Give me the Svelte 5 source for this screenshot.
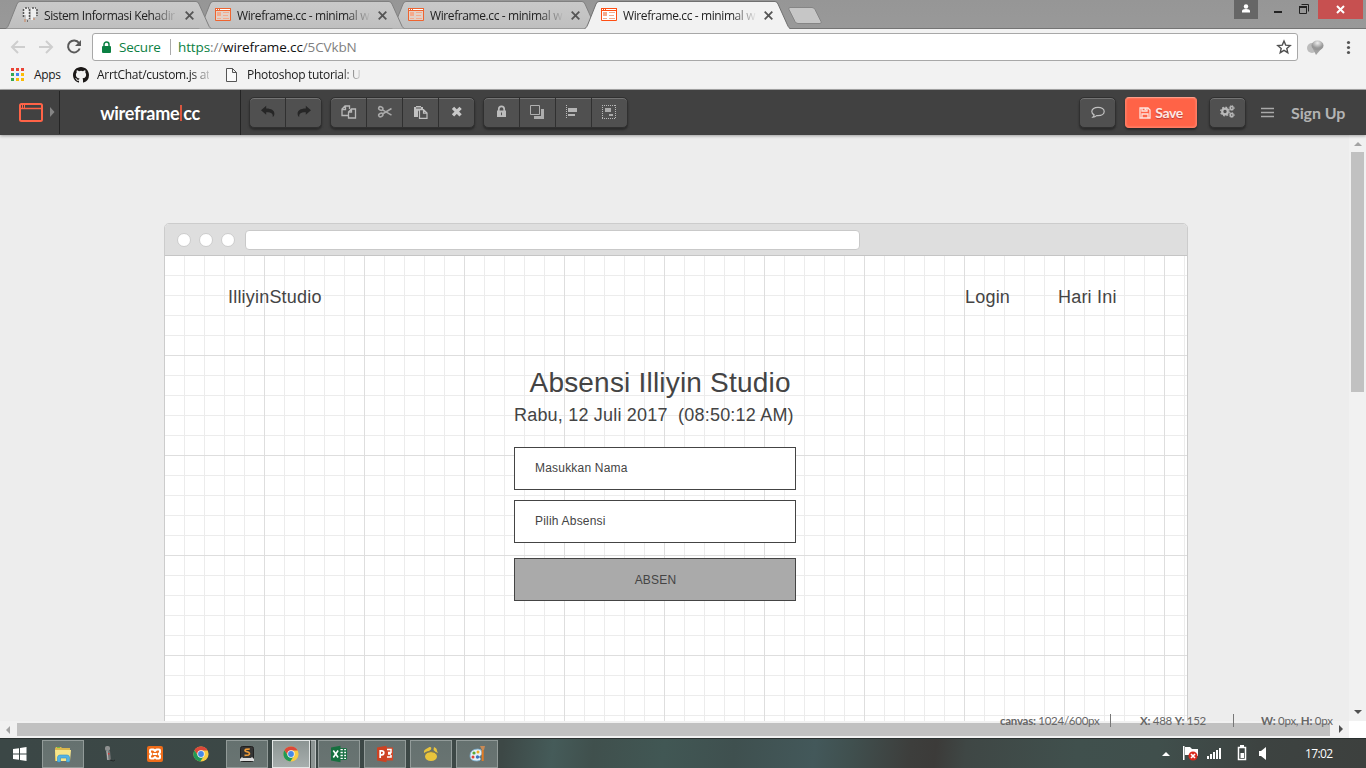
<script>
  const tabs = [
    { title: 'Sistem Informasi Kehadir', kind: 'sheet' },
    { title: 'Wireframe.cc - minimal w', kind: 'wire' },
    { title: 'Wireframe.cc - minimal w', kind: 'wire' },
    { title: 'Wireframe.cc - minimal w', kind: 'wire', active: true }
  ];
  const appDots = ['#ea4335', '#ea4335', '#ea4335', '#34a853', '#4285f4', '#fbbc05', '#34a853', '#fbbc05', '#fbbc05'];
  const editTools = ['copy', 'cut', 'paste', 'delete'];
  const arrangeTools = ['lock', 'layers', 'align', 'group'];
  const tasks = [
    { icon: 'explorer', open: true },
    { icon: 'mic' },
    { icon: 'xampp' },
    { icon: 'chrome' },
    { icon: 'sublime', open: true },
    { icon: 'chrome', open: true, active: true },
    { icon: 'excel', open: true },
    { icon: 'ppt', open: true },
    { icon: 'claw', open: true },
    { icon: 'paint', open: true }
  ];
</script>

{#snippet tool(name)}
  <svg class="glyph" width="36" height="30" viewBox="0 0 36 30">
    {#if name === 'undo'}
      <path fill="#262626" d="M11 13.2 16.2 8.8v2.7c5.600 0 8.200 2.200 8.200 5.200 0 1.500-.6 2.600-1.700 3.300.4-2.800-.7-4.800-6.500-4.800v2.500z" />
    {:else if name === 'redo'}
      <path fill="#262626" d="M25 13.2 19.800 8.800v2.700c-5.600 0-8.200 2.200-8.200 5.200 0 1.500.6 2.600 1.700 3.300-.4-2.800.7-4.800 6.500-4.800v2.500z" />
    {:else if name === 'copy'}
      <path fill="none" stroke="#b9b9b9" stroke-width="1.300" d="M17 18.500h-6v-6.500l3-3h4.500v3M14.500 9v3.500H11M17.500 15l3-3h4v9h-7zM20.500 12v3h-3" />
    {:else if name === 'cut'}
      <g fill="none" stroke="#a9a9a9" stroke-width="1.500"><ellipse cx="13.800" cy="11.500" rx="2.200" ry="1.700" transform="rotate(25 13.800 11.500)" /><ellipse cx="13.800" cy="18" rx="2.200" ry="1.700" transform="rotate(-25 13.800 18)" /><path d="m15.500 12.800 9 5.400M15.500 17 24.500 11.500" /></g>
    {:else if name === 'paste'}
      <path fill="#c1c1c1" d="M11 10h2V9h5v1h2v2h-3l-2 2.500V20h-4z" /><path fill="#505050" d="M13 10.500h5v1h-5z" /><path fill="none" stroke="#c1c1c1" stroke-width="1.200" d="M16.500 12.600h4l3.500 3.500v5.300h-7.500zM20.500 12.600v3.500H24" />
    {:else if name === 'delete'}
      <path stroke="#c8c8c8" stroke-width="3.300" d="m14 10.800 7.600 7.600m0-7.600L14 18.400" />
    {:else if name === 'lock'}
      <path fill="#bcbcbc" d="M13 13.500h9V20h-9z" /><path fill="none" stroke="#bcbcbc" stroke-width="1.700" d="M14.800 14v-1.900a2.700 2.700 0 0 1 5.400 0V14" /><path stroke="#555" d="M17.500 15.500v2.700" />
    {:else if name === 'layers'}
      <path fill="#adadad" d="M24 12v10H14v-3h7v-7z" /><path fill="#505050" stroke="#b0b0b0" d="M10.500 8.500h9v9h-9z" />
    {:else if name === 'align'}
      <path stroke="#bbb" stroke-dasharray="1 1" d="M10.500 8v14" /><path fill="#b5b5b5" d="M12 11h9v4h-9zm0 6h7v2h-7z" />
    {:else if name === 'group'}
      <path fill="none" stroke="#b9b9b9" stroke-dasharray="1 1" d="M10 8.500h14M10 21.500h14M10.500 8v14M23.500 8v14" /><path fill="#aaa" d="M13 11h6v4h-6zm4 6h4v2h-4z" />
    {:else if name === 'comment'}
      <path fill="none" stroke="#c1c1c1" stroke-width="1.200" d="M18 10.300c3.600 0 6.200 1.800 6.200 4.200s-2.600 4.200-6.200 4.200l-1.400-.1c-1 .9-2.400 1.500-3.700 1.600.7-.7 1.100-1.400 1.200-2.300-1.500-.8-2.300-2-2.300-3.400 0-2.400 2.600-4.200 6.200-4.200z" />
    {:else if name === 'gears'}
      <g fill="none" stroke="#b9b9b9"><circle cx="15" cy="14.500" r="2.800" stroke-width="2.200" /><circle cx="15" cy="14.500" r="4.300" stroke-width="1.300" stroke-dasharray="1.700 1.680" /><circle cx="21.700" cy="11" r="1.500" stroke-width="1.400" /><circle cx="21.700" cy="18" r="1.500" stroke-width="1.400" /><circle cx="21.700" cy="11" r="2.500" stroke-dasharray="1 1" /><circle cx="21.700" cy="18" r="2.500" stroke-dasharray="1 1" /></g>
    {/if}
  </svg>
{/snippet}

{#snippet app(name)}
  <svg width="18" height="18" viewBox="0 0 18 18">
    {#if name === 'explorer'}
      <path fill="#d9b64d" d="M1 3.500 2 2h5l1 1h8v13H1z" /><path fill="#f7e58b" d="M1 5h16l-1 11H2z" /><path fill="#72b944" d="M3 2h3v1H3z" /><path fill="#53b3e4" stroke="#3590c4" stroke-width=".6" d="M3.500 17v-5Q4 10 6 10h7q2 0 2.500 2v5h-3v-4h-6v4z" />
    {:else if name === 'mic'}
      <rect x="5" y="1" width="5" height="5" rx="2" fill="#8e9090" /><path fill="#727575" d="M6 6h4l1 9H7z" /><path fill="#b9bcbc" d="M6.500 6h1l1 9h-1z" /><path fill="#d53939" d="M8 8h1.500v1.500H8z" /><path fill="none" stroke="#242828" d="M10 15q4 2 5 0" />
    {:else if name === 'xampp'}
      <rect x="1" y="1" width="16" height="16" rx="2" fill="#ee6c19" /><path fill="none" stroke="#fff" stroke-width="2" stroke-linejoin="round" d="M5 4.500h2.500L9 6l1.500-1.500H13q1 0 1 1v2L12.500 9l1.500 1.500v2q0 1-1 1h-2.500L9 12l-1.500 1.500H5q-1 0-1-1v-2L5.500 9 4 7.500v-2q0-1 1-1zM7 9h4" />
    {:else if name === 'chrome'}
      <circle cx="9" cy="9" r="7.600" fill="#f9cc42" /><path fill="#dc483a" d="M2.400 5.200A7.600 7.600 0 0 1 15.700 5.500H9A3.500 3.500 0 0 0 5.900 10.500z" /><path fill="#209957" d="M2.400 5.200A7.600 7.600 0 0 0 8.300 16.600l3.600-5.600A3.500 3.500 0 0 1 6 10.800z" /><circle cx="9" cy="9" r="3.700" fill="#f3f3f3" /><circle cx="9" cy="9" r="2.900" fill="#4688e8" />
    {:else if name === 'sublime'}
      <rect x="2.500" y="1.500" width="13" height="15" rx="2" fill="#343434" stroke="#202020" /><path fill="#ddd" d="m2 14 2-2h10l2 2v2H2z" /><path fill="#393939" d="m4 13 1-1h8l1 1z" /><path fill="none" stroke="#ee9b38" stroke-width="1.700" d="M11.800 4 8 4.300Q6 5.500 8 6.500l2.500.7Q12.500 9 10.500 10L6.500 10.400" />
    {:else if name === 'excel'}
      <path fill="#fff" stroke="#1b7044" d="M9 3.500h7.500v11H9z" /><path stroke="#1b7044" stroke-width="1.400" d="M10 6h6M10 9h6M10 12h6M13.500 4v10" /><path fill="#16703f" d="m1 2.500 9.500-1.700v16.400L1 15.500z" /><path stroke="#fff" stroke-width="1.600" d="m3.300 5.500 4.800 7M8.100 5.500l-4.800 7" />
    {:else if name === 'ppt'}
      <path fill="#d34727" d="M9 2.500h8v13H9z" /><path fill="none" stroke="#fff" stroke-width="1.500" d="M11 4.500h4v3h-3m0 1.500h3m-4 3h4V10" /><path fill="#cd4222" d="m1 2.500 9.500-1.700v16.400L1 15.500z" /><path fill="none" stroke="#fff" stroke-width="1.700" d="M4.200 13V5.800h1.600q2 0 2 2t-2 2H4.200" />
    {:else if name === 'claw'}
      <g fill="#e9c43c"><ellipse cx="9" cy="11.500" rx="6" ry="4.500" /><path d="M2 8Q1.500 5 4 4L7.500 2Q10 1.500 9 4.500L7 6Q4 6.500 2 8zM12 2q3 1 3 4l1 2q-3-1-4.500-3z" /></g><path fill="none" stroke="#8b7c41" d="M3 9Q5 6.500 9 6.600q3 0 5.500 2" />
    {:else}
      <path fill="#e5f0f6" stroke="#77afd2" stroke-width=".8" d="M2 11q0-7 8-7 4 0 4 4 0 2-2 3t1 3q-1 2-4 2-7 0-7-5z" /><circle cx="6" cy="8" r="1.600" fill="#58a735" /><circle cx="10" cy="7" r="1.500" fill="#efae24" /><circle cx="5" cy="12" r="1.500" fill="#dd4538" /><circle cx="9.500" cy="12" r="1.700" fill="#3d73be" /><path fill="#c98a55" d="M12 1h5l-1 4h-2z" /><path stroke="#e37c24" stroke-width="2" d="M14.700 5v11" />
    {/if}
  </svg>
{/snippet}

<div class="screen">
  <div class="tabstrip">
    <svg class="tabshapes" width="840" height="29">
      <defs>
        <linearGradient id="tab" x2="0" y2="1"><stop stop-color="#c9c9c9" /><stop offset="1" stop-color="#bfbfbf" /></linearGradient>
      </defs>
      <path d="M0 28.500H840" stroke="#747474" />
      {#each [386, 193, 0] as x}
        <path transform="translate({x} 0)" fill="url(#tab)" stroke="#808080" d="M6 28.500Q8 27 9 24L17 4Q18 1.500 20 1.500H196Q198 1.500 199 4l9 20q1 3 3 4.500" />
      {/each}
      <path fill="#f2f2f2" stroke="#707070" d="M585 28.500Q587 27 588 24l8-20Q597 1.500 599 1.500H775Q777 1.500 778 4l9 20q1 3 3 4.500" />
      <path stroke="#f2f2f2" stroke-width="2" d="M586 29H789" />
      <path fill="#c6c6c6" stroke="#858585" d="M790 7.500h22q2 0 3 2l6 12q1 2-1 2h-22q-2 0-3-2l-6-12q-1-2 1-2z" />
    </svg>
    <div class="tabs">
      {#each tabs as t}
        <div class="tab" class:active={t.active}>
          <svg width="16" height="16" viewBox="0 0 16 16">
            {#if t.kind === 'wire'}
              <path fill={t.active ? '#fff' : '#e3d1c8'} stroke={t.active ? '#ff4e12' : '#ee6430'} d="M.5 1.500h15v12H.5z" /><path fill={t.active ? '#ff4e12' : '#ee6430'} d="M0 1h16v3H0z" /><path fill="#fff" d="M1 2h1v1H1zm2 0h1v1H3zM5 2h10v1H5z" /><path fill="#f4aa8c" d="M2 5h4v4H2zm6 0h6v1H8zm0 3h5v1H8zm-6 3h4v1H2zm6 0h6v1H8z" />
            {:else}
              <path fill="#eee" d="M2 1h5v11H4V8H1zM9 1h5v9h-3v3H9z" /><path stroke="#555" fill="none" stroke-width="1.500" stroke-dasharray="2 1" d="M3 1h4M10 1h4M1.500 2v8M7.500 2v10M2 14h4M15 2v7" /><path fill="#c6a18d" d="M2 12h2v3H2zm9-1h2v2h-2z" />
            {/if}
          </svg>
          <span class="title">{t.title}</span>
          <svg class="x" width="9" height="9" viewBox="0 0 9 9"><path d="m.7.7 7.600 7.600M8.300.7.7 8.300" stroke="#555" stroke-width="1.800" /></svg>
        </div>
      {/each}
    </div>
    <div class="window">
      <div class="user"><svg width="10" height="10"><circle cx="5" cy="2.500" r="2.200" fill="#fff" /><path fill="#fff" d="M1 8.500V7q0-2 4-2t4 2v1.500z" /></svg></div>
      <svg class="winbtn" width="60" height="19"><path fill="#222" d="M16 11h8v2h-8z" /><path fill="none" stroke="#222" d="M43.500 4.500h7v7M41 6.500h7.500v7h-7v-7" /><path stroke="#222" stroke-width="2" d="M41 7h8" /></svg>
      <div class="close"><svg width="9" height="9"><path stroke="#fff" stroke-width="2" d="m1 1 7 7M8 1 1 8" /></svg></div>
    </div>
  </div>

  <div class="navbar">
    <svg class="nav" width="92" height="32" fill="none">
      <path stroke="#cecece" stroke-width="2" d="M25 18H12m6-6-6 6 6 6" /><path stroke="#cecece" stroke-width="2" d="M39 18h13m-6-6 6 6-6 6" /><path stroke="#5a5a5a" stroke-width="2" d="M79 14a6 6 0 1 0 .7 5.500" /><path fill="#5a5a5a" d="M81 11v6h-6z" />
    </svg>
    <div class="address">
      <svg width="9" height="12"><rect y="5" width="9" height="7" rx="1" fill="#0b8043" /><path fill="none" stroke="#0b8043" stroke-width="1.500" d="M2 5V3.500a2.500 2.500 0 0 1 5 0V5" /></svg>
      <span class="secure">Secure</span><i></i>
      <span class="url"><b>https</b>://<em>wireframe.cc</em>/5CVkbN</span>
      <svg class="star" width="16" height="16"><path fill="none" stroke="#505050" stroke-width="1.400" d="m8 2 1.700 4.100 4.500.4-3.400 2.900 1 4.300L8 11.400l-3.800 2.300 1-4.300-3.400-2.900 4.500-.4z" /></svg>
    </div>
    <svg width="68" height="32"><defs><radialGradient id="ball" cx=".5" cy=".25"><stop stop-color="#eee" /><stop offset="1" stop-color="#969696" /></radialGradient></defs><ellipse cx="14" cy="19" rx="5" ry="5" fill="#bcbcbc" /><path fill="#a1a1a1" d="m15 20 3 6 6-7z" /><ellipse cx="19.500" cy="16.500" rx="6" ry="5" fill="url(#ball)" /><g fill="#555"><circle cx="50.500" cy="13.500" r="1.600" /><circle cx="50.500" cy="18.500" r="1.600" /><circle cx="50.500" cy="23.500" r="1.600" /></g></svg>
  </div>

  <div class="bookmarks">
    <div class="dots">{#each appDots as c}<i style="background:{c}"></i>{/each}</div>
    <span class="bm apps">Apps</span>
    <svg width="16" height="16" viewBox="0 0 16 16"><path fill="#1b1817" d="M8 0C3.580 0 0 3.580 0 8c0 3.540 2.290 6.530 5.470 7.590.4.070.55-.17.55-.38v-1.490c-2.230.48-2.690-.94-2.690-.94-.36-.93-.9-1.180-.9-1.180-.72-.5.06-.49.060-.49.81.06 1.230.83 1.230.83.71 1.230 1.870.87 2.330.67.07-.52.28-.87.500-1.070-1.770-.2-3.640-.89-3.640-3.950 0-.87.310-1.590.82-2.150-.08-.2-.36-1.020.08-2.120 0 0 .67-.21 2.200.82a7.500 7.500 0 0 1 4 0c1.530-1.040 2.200-.82 2.200-.82.44 1.100.16 1.920.08 2.120.51.56.82 1.270.82 2.150 0 3.070-1.870 3.750-3.650 3.950.29.25.54.73.54 1.480v2.190c0 .21.150.46.55.38A8 8 0 0 0 16 8c0-4.420-3.580-8-8-8z" /></svg>
    <span class="bm fade arrt">ArrtChat/custom.js at</span>
    <svg width="11" height="14"><path fill="#fafafa" stroke="#555" d="M.5.500h6l4 4v9H.5zM6.500.500v4h4" /></svg>
    <span class="bm fade photo">Photoshop tutorial: U</span>
  </div>

  <header>
    <div class="mark"><svg width="38" height="22"><rect x="1" y="3" width="22" height="17" rx="1.500" fill="none" stroke="#ff6347" stroke-width="2" /><path stroke="#ff6347" stroke-width="1.500" d="M1 7.500h22" /><path stroke="#ff6347" d="M3.500 4v3m2-3v3" /><path fill="#858585" d="m31 6 4.500 5L31 16z" /></svg></div>
    <div class="brand">wireframe<i></i>cc</div>
    <div class="group"><button>{@render tool('undo')}</button><button>{@render tool('redo')}</button></div>
    <div class="group">{#each editTools as n}<button>{@render tool(n)}</button>{/each}</div>
    <div class="group">{#each arrangeTools as n}<button>{@render tool(n)}</button>{/each}</div>
    <div class="right">
      <div class="group"><button>{@render tool('comment')}</button></div>
      <button class="save"><svg width="12" height="12"><path fill="none" stroke="#ffe3dd" stroke-width="1.300" d="M1 1h8l2 2v8H1zM3 1v3h5V1M3 11V7h6v4" /><path fill="#ffe3dd" d="M5.500 1H7v2H5.500z" /></svg>Save</button>
      <div class="group gear"><button>{@render tool('gears')}</button></div>
      <svg class="burger" width="13" height="11"><path stroke="#a9a9a9" stroke-width="1.500" d="M0 1.500h13M0 5.500h13M0 9.500h13" /></svg>
      <span class="sign">Sign Up</span>
    </div>
  </header>

  <main>
    <div class="stage">
      <section class="board">
        <div class="chrome"><i></i><i></i><i></i><div></div></div>
        <div class="paper">
          <span class="node n18" style="left:63px;top:31px">IlliyinStudio</span>
          <span class="node n18" style="left:800px;top:31px">Login</span>
          <span class="node n18" style="left:893px;top:31px">Hari Ini</span>
          <span class="node n28" style="left:364.5px;top:110px">Absensi Illiyin Studio</span>
          <span class="node n18" style="left:349px;top:149px">Rabu, 12 Juli 2017&nbsp; (08:50:12 AM)</span>
          <div class="node box" style="left:349px;top:191px">Masukkan Nama</div>
          <div class="node box" style="left:349px;top:244px">Pilih Absensi</div>
          <div class="node box submit" style="left:349px;top:302px">ABSEN</div>
        </div>
      </section>
    </div>
    <div class="vscroll"><svg width="17" height="17"><path fill="#a3a3a3" d="m5 11 4-4 4 4z" /></svg><i></i><svg width="17" height="17"><path fill="#505050" d="m5 6 4 4 4-4z" /></svg></div>
  </main>
  <div class="hscroll"><svg width="17" height="17"><path fill="#a3a3a3" d="m10 5-4 4 4 4z" /></svg><i></i><svg width="19" height="17"><path fill="#505050" d="m9 4 4 4-4 4z" /></svg><b></b></div>
  <div class="status">
    <span class="s1"><b>canvas:</b> 1024/600px</span><i></i>
    <span class="s2"><b>X:</b> 488 <b>Y:</b> 152</span><i></i>
    <span class="s3"><b>W:</b> 0px, <b>H:</b> 0px</span>
  </div>

  <footer>
    <div class="start"><svg width="14" height="14"><path fill="#fff" d="m0 2 6-.8V6.500H0zm7-1L13.500 0v6.500H7zM0 7.500h6v5.300L0 12zm7 0h6.500V14L7 13z" /></svg></div>
    {#each tasks as t}
      <div class="task" class:open={t.open} class:current={t.active}>{@render app(t.icon)}</div>
    {/each}
    <div class="tray">
      <svg width="110" height="28">
        <path fill="#fff" d="m4 16 4-4 4 4z" />
        <path fill="#fff" d="M25 6h1.500v14H25zM27 7h5l2 2h6v7h-7l-1-1h-5z" /><circle cx="35" cy="16" r="4.500" fill="#d9291c" /><path stroke="#fff" stroke-width="1.600" d="m33 14 4 4m0-4-4 4" />
        <path fill="#fff" d="M49 16h2v3h-2zm3-2h2v5h-2zm3-2h2v7h-2zm3-2h2v9h-2zm3-2h2v11h-2z" />
        <path fill="#fff" d="M82 5h4v2h-4z" /><path fill="none" stroke="#fff" stroke-width="1.500" d="M80.500 7.500h7v12h-7z" /><path fill="#fff" d="M82.500 13h3.500v5h-3.500z" />
        <path fill="#fff" d="M101 11h2l5-4v13l-5-4h-2z" />
      </svg>
    </div>
    <span class="clock">17:02</span>
  </footer>
</div>

<style>
  :global(body) { margin: 0; overflow: hidden; }
  .screen { position: relative; width: 1366px; height: 768px; display: flex; flex-direction: column; overflow: hidden; font-family: 'Open Sans', 'Noto Sans', sans-serif; background: #ededed; }
  .screen * { box-sizing: border-box; }
  svg { display: block; flex: none; }
  i, em { font-style: normal; }
  button { padding: 0; border: 0; background: none; font: inherit; color: inherit; }

  .tabstrip { position: relative; height: 29px; flex: none; display: flex; background: linear-gradient(#969696, #999); border-bottom: 1px solid #747474; }
  .tabshapes { position: absolute; left: 0; top: 0; }
  .tabs { position: relative; display: flex; padding-left: 22px; }
  .tab { width: 193px; height: 29px; display: flex; align-items: center; padding-top: 1px; }
  .title { width: 134px; margin-left: 6px; white-space: nowrap; font-size: 12px; letter-spacing: -.4px; color: #222; -webkit-mask-image: linear-gradient(90deg, #000 108px, transparent 134px); mask-image: linear-gradient(90deg, #000 108px, transparent 134px); }
  .x { margin-left: 6.500px; }
  .window { margin-left: auto; display: flex; padding-right: 3px; }
  .user { width: 24px; height: 19px; background: #666; display: flex; justify-content: center; padding-top: 4px; }
  .close { width: 45px; height: 19px; background: #c75050; display: flex; align-items: center; justify-content: center; }

  .navbar { height: 32px; flex: none; display: flex; background: #f2f2f2; }
  .address { width: 1206px; height: 28px; margin-top: 4px; border: 1px solid #a8a8a8; border-radius: 3px; background: #fff; display: flex; align-items: center; padding-left: 9px; font-size: 13.500px; color: #808080; }
  .secure { width: 51px; margin-left: 8px; color: #0b8043; letter-spacing: -.2px; }
  .address i { width: 1px; height: 16px; background: #aaa; }
  .url { margin-left: 7px; letter-spacing: -.12px; }
  .url b { font-weight: 400; color: #0b8043; }
  .url em { color: #111; }
  .star { margin-left: auto; margin-right: 5px; }

  .bookmarks { height: 29px; flex: none; display: flex; align-items: center; padding: 0 0 1px 11px; background: #f2f2f2; border-bottom: 1px solid #aaa; }
  .dots { display: grid; grid-template-columns: repeat(3, 3px); gap: 2px; }
  .dots i { width: 3px; height: 3px; }
  .bm { font-size: 12px; letter-spacing: -.3px; white-space: nowrap; color: #1a1a1a; }
  .apps { width: 39px; margin-left: 10px; }
  .arrt { width: 112px; margin: 0 17px 0 8px; }
  .photo { width: 114px; margin-left: 10px; }
  .fade { -webkit-mask-image: linear-gradient(90deg, #000 94px, transparent 117px); mask-image: linear-gradient(90deg, #000 94px, transparent 117px); }

  header { position: relative; z-index: 2; height: 45px; flex: none; display: flex; align-items: center; background: #414141; box-shadow: 0 1px 3px #0005; font-family: Lato, sans-serif; }
  .mark { width: 60px; height: 43px; padding: 10px 0 0 19px; border-right: 1px solid #242424; }
  .brand { width: 181px; height: 45px; border-right: 1px solid #242424; display: flex; align-items: center; justify-content: center; font-size: 18px; font-weight: 700; color: #fff; letter-spacing: -.3px; }
  .brand i { width: 2px; height: 16px; margin: 0 1px; background: #d9563f; }
  .group { display: flex; margin-left: 8px; height: 31px; border: 1px solid #303030; border-radius: 5px; background: #505050; box-shadow: inset 0 1px #747474, 0 2px 2px #2b2b2b; overflow: hidden; }
  .group button { width: 36px; height: 29px; border-right: 1px solid #303030; overflow: hidden; }
  .group button .glyph { margin-top: -1px; }
  .group button:last-child { border-right: 0; width: 35px; }
  .right { margin-left: auto; display: flex; align-items: center; padding-right: 21px; }
  .right .group { margin-left: 0; }
  .save { width: 72px; height: 31px; margin: 0 12px 0 9px; border: 1px solid #ff7c63; border-top-color: #ff9d89; border-radius: 4px; background: #ff6347; box-shadow: inset 0 0 2px #ff9a85, 0 2px 2px #292929; display: flex; align-items: center; justify-content: center; gap: 4px; color: #ffe8e3; font-size: 14px; font-weight: 700; letter-spacing: -.4px; text-shadow: 0 1px 1px #a33c; }
  .burger { margin-left: 15px; }
  .sign { margin-left: 17px; width: 54px; white-space: nowrap; color: #b3b3b3; font-size: 16px; font-weight: 700; letter-spacing: -.1px; }

  main { height: 586px; flex: none; display: flex; background: #ededed; }
  .stage { width: 1349px; padding: 88px 0 0 164px; overflow: hidden; }
  .board { width: 1024px; height: 632px; border: 1px solid #ccc; border-radius: 5px 5px 0 0; background: #fff; overflow: hidden; }
  .chrome { height: 32px; display: flex; align-items: center; padding-left: 12px; background: #dedede; border-bottom: 1px solid #c5c5c5; }
  .chrome i { width: 14px; height: 14px; margin-right: 8px; border: 1px solid #ccc; border-radius: 50%; background: #fff; }
  .chrome div { width: 615px; height: 20px; margin-left: 2px; border: 1px solid #c9c9c9; border-radius: 4px; background: #fff; }
  .paper { position: relative; height: 600px; background-image:
    repeating-linear-gradient(90deg, transparent 0 99px, #dedede 99px 100px),
    repeating-linear-gradient(180deg, transparent 0 99px, #dedede 99px 100px),
    repeating-linear-gradient(90deg, transparent 0 19px, #ececec 19px 20px),
    repeating-linear-gradient(180deg, transparent 0 19px, #ececec 19px 20px); }
  .node { position: absolute; font-family: 'Liberation Sans', Arial, sans-serif; color: #444; white-space: nowrap; }
  .n18 { font-size: 18px; line-height: 20px; letter-spacing: .2px; }
  .n28 { font-size: 28px; line-height: 34px; letter-spacing: .2px; }
  .box { width: 282px; height: 43px; padding-left: 20px; border: 1px solid #444; background: #fff; font-size: 12px; line-height: 41px; letter-spacing: .2px; }
  .submit { background: #aaa; padding: 1px 0 0 1px; text-align: center; }

  .vscroll { width: 17px; background: #f1f1f1; display: flex; flex-direction: column; }
  .vscroll i { width: 13px; height: 240px; margin: 0 0 auto 2px; background: #c1c1c1; }
  .hscroll { height: 17px; flex: none; display: flex; background: #f1f1f1; }
  .hscroll i { width: 1313px; height: 13px; margin-top: 2px; background: #c1c1c1; }
  .hscroll b { width: 17px; background: #fff; }
  .status { position: absolute; right: 34px; top: 713px; z-index: 3; height: 15px; display: flex; align-items: center; font: 11.500px Lato, sans-serif; letter-spacing: -.27px; color: #666; white-space: nowrap; }
  .status i { width: 1px; height: 13px; background: #777; }
  .s1 { width: 110px; }
  .s2 { width: 93px; margin-left: 29px; }
  .s3 { width: 71px; margin-left: 27px; }

  footer { height: 30px; flex: none; display: flex; align-items: center; gap: 4px; background: linear-gradient(97deg, #3b4746, #3d4846 500px, #455b59 550px, #40504d 590px, #415754 660px, #3f504f 730px, #43585a 810px, #40504f 845px, #3d3e3c 905px, #3c3b39 930px, #3f4745 960px, #40504d 1070px, #404f4c 1150px, #3d4341 1250px, #3d403e); border-top: 1px solid #29302f; }
  .start { width: 38px; padding-left: 13px; }
  .task { width: 42px; height: 28px; display: flex; align-items: center; justify-content: center; border: 1px solid transparent; }
  .open { background: linear-gradient(#65716f, #697472); border-color: #929b99; }
  .current { position: relative; width: 38px; margin-right: 4px; background: linear-gradient(#8c9593, #a7aead); border-color: #e2e6e5; }
  .current::after { content: ''; position: absolute; left: 37px; top: -1px; width: 4px; height: 28px; border: 1px solid #bdc3c2; border-left-color: #39413f; background: #8c9593; }
  .tray { margin-left: auto; }
  .clock { width: 27px; margin: 0 34px 0 33px; color: #fff; font-size: 12px; letter-spacing: -.65px; }
</style>
